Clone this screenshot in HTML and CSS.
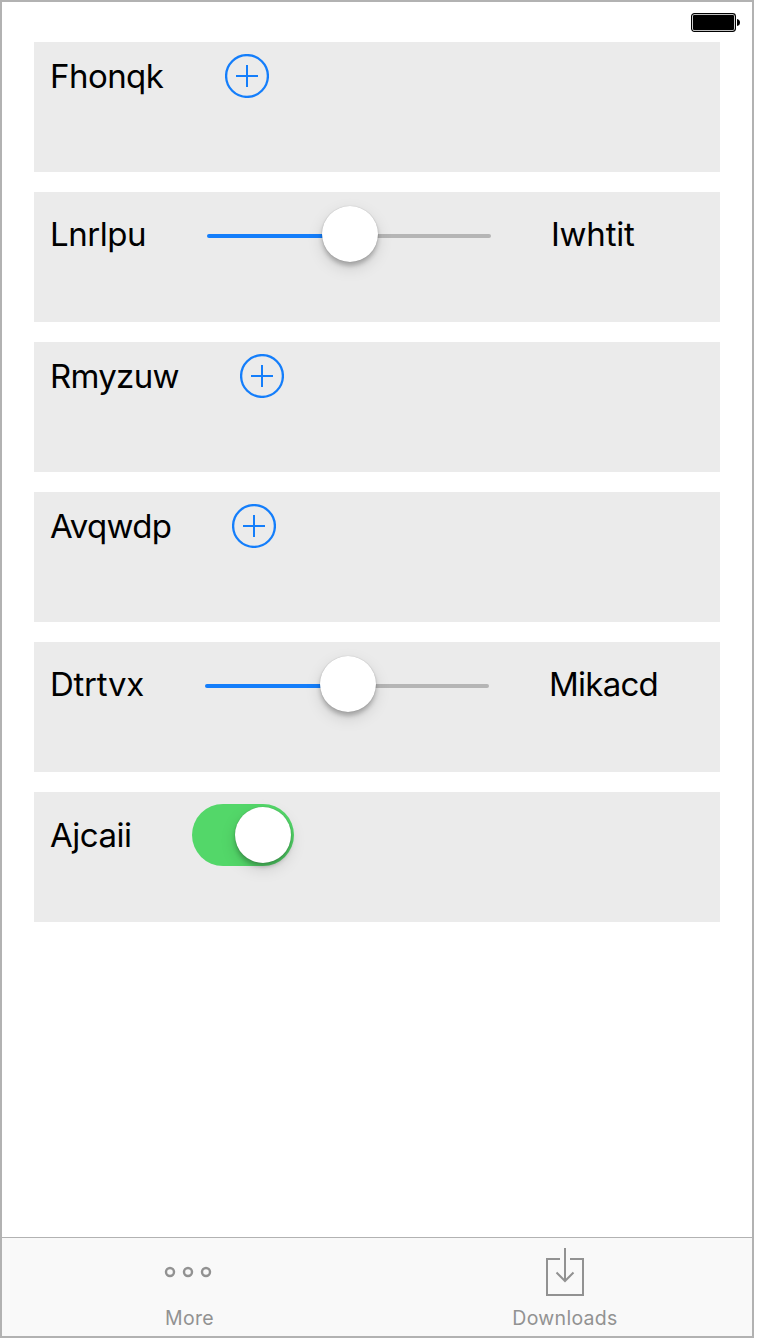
FILE: index.html
```html
<!DOCTYPE html>
<html lang="en">
<head>
<meta charset="utf-8">
<title>Settings</title>
<link rel="stylesheet" href="styles.css">
</head>
<body>
<div class="phone">
  <header class="status">
    <svg width="50" height="20" viewBox="0 0 50 20"><rect x=".6" y=".6" width="43.8" height="17.8" rx="2.8" fill="none" stroke="#000" stroke-width="1.2"/><rect x="2" y="2" width="41" height="15" rx="1" fill="#000"/><path d="M46 6q3 .5 3 3.500t-3 3.500z" fill="#000"/></svg>
  </header>
  <main class="list">
    <section class="card">
      <span class="label fhonqk">Fhonqk</span>
      <svg class="add" viewBox="0 0 44 44"><circle cx="22" cy="22" r="20.9"/><path d="M11 22h22M22 11v22"/></svg>
    </section>
    <section class="card">
      <span class="label lnrlpu">Lnrlpu</span>
      <div class="slider"><div class="fill"></div><div class="knob"></div><div class="rest"></div></div>
      <span class="label iwhtit">Iwhtit</span>
    </section>
    <section class="card">
      <span class="label rmyzuw">Rmyzuw</span>
      <svg class="add" viewBox="0 0 44 44"><circle cx="22" cy="22" r="20.9"/><path d="M11 22h22M22 11v22"/></svg>
    </section>
    <section class="card">
      <span class="label avqwdp">Avqwdp</span>
      <svg class="add" viewBox="0 0 44 44"><circle cx="22" cy="22" r="20.9"/><path d="M11 22h22M22 11v22"/></svg>
    </section>
    <section class="card">
      <span class="label dtrtvx">Dtrtvx</span>
      <div class="slider"><div class="fill"></div><div class="knob"></div><div class="rest"></div></div>
      <span class="label mikacd">Mikacd</span>
    </section>
    <section class="card">
      <span class="label ajcaii">Ajcaii</span>
      <div class="switch"><div class="knob"></div></div>
    </section>
  </main>
  <nav class="tabs">
    <div class="tab">
      <svg width="50" height="50" viewBox="0 0 50 50"><g fill="none" stroke="#929292" stroke-width="2.4"><circle cx="7" cy="25" r="4"/><circle cx="25" cy="25" r="4"/><circle cx="43" cy="25" r="4"/></g></svg>
      <span class="caption more">More</span>
    </div>
    <div class="tab">
      <svg width="50" height="50" viewBox="0 0 50 50"><path d="M20 12H7V48H43V12H30M25 1V34M16.500 25.500L25 34L33.500 25.500" fill="none" stroke="#929292" stroke-width="2"/></svg>
      <span class="caption">Downloads</span>
    </div>
  </nav>
</div>
</body>
</html>
```
FILE: styles.css
```css
body {
  margin: 0;
  background: #fff;
  font-family: Inter, "Liberation Sans", sans-serif;
}
.phone {
  box-sizing: border-box;
  width: 754px;
  height: 1338px;
  border: 2px solid #b2b2b2;
  display: flex;
  flex-direction: column;
}
.status {
  box-sizing: border-box;
  height: 40px;
  padding: 11px 11px 0 0;
  display: flex;
  justify-content: flex-end;
}
.status svg { display: block; }
.list {
  flex: 1;
  padding: 0 32px;
  display: flex;
  flex-direction: column;
  gap: 20px;
}
.card {
  box-sizing: border-box;
  height: 130px;
  padding: 12px 16px;
  background: #ebebeb;
  display: grid;
  grid-template-columns: auto auto 1fr;
  align-items: center;
  align-content: start;
  justify-content: start;
}
.label {
  font-size: 33px;
  line-height: 40px;
  color: #000;
  white-space: nowrap;
}
.fhonqk { width: 175px; letter-spacing: -0.55px; }
.lnrlpu { width: 157px; letter-spacing: -0.45px; }
.rmyzuw { width: 190px; letter-spacing: -0.7px; }
.avqwdp { width: 182px; letter-spacing: -0.7px; }
.dtrtvx { width: 155px; letter-spacing: -0.25px; }
.ajcaii { width: 142px; letter-spacing: -0.5px; }
.iwhtit { padding-left: 60px; letter-spacing: -0.25px; }
.mikacd { padding-left: 60px; letter-spacing: -0.75px; }
.add {
  display: block;
  width: 44px;
  height: 44px;
  fill: none;
  stroke: #147efb;
  stroke-width: 2;
}
.add circle { stroke-width: 2.3; }
.slider {
  width: 284px;
  height: 60px;
  display: flex;
  align-items: center;
}
.fill, .rest {
  height: 4px;
  margin-top: 4px;
}
.fill { width: 117px; background: #147efb; border-radius: 2px 0 0 2px; margin-right: -2px; }
.rest { flex: 1; background: #b5b5b5; border-radius: 0 2px 2px 0; margin-left: -2px; }
.knob {
  z-index: 1;
  width: 56px;
  height: 56px;
  border-radius: 50%;
  background: #fff;
  box-shadow: 0 0 1px rgba(0,0,0,.28), 0 4px 4px rgba(0,0,0,.22), 0 6px 16px rgba(0,0,0,.13);
}
.switch {
  box-sizing: border-box;
  width: 102px;
  height: 62px;
  padding: 3px;
  border-radius: 31px;
  background: #53d769;
  display: flex;
  justify-content: flex-end;
}
.tabs {
  box-sizing: border-box;
  height: 99px;
  border-top: 1px solid #b2b2b2;
  background: #f9f9f9;
  display: grid;
  grid-template-columns: 372px 378px;
}
.tab {
  padding-top: 9px;
  display: flex;
  flex-direction: column;
  align-items: center;
  gap: 9px;
}
.tab:last-child { padding-left: 4px; }
.caption {
  font-size: 19.5px;
  line-height: 24px;
  letter-spacing: 0.3px;
  color: #929292;
}
.more { padding-left: 3px; }
```
